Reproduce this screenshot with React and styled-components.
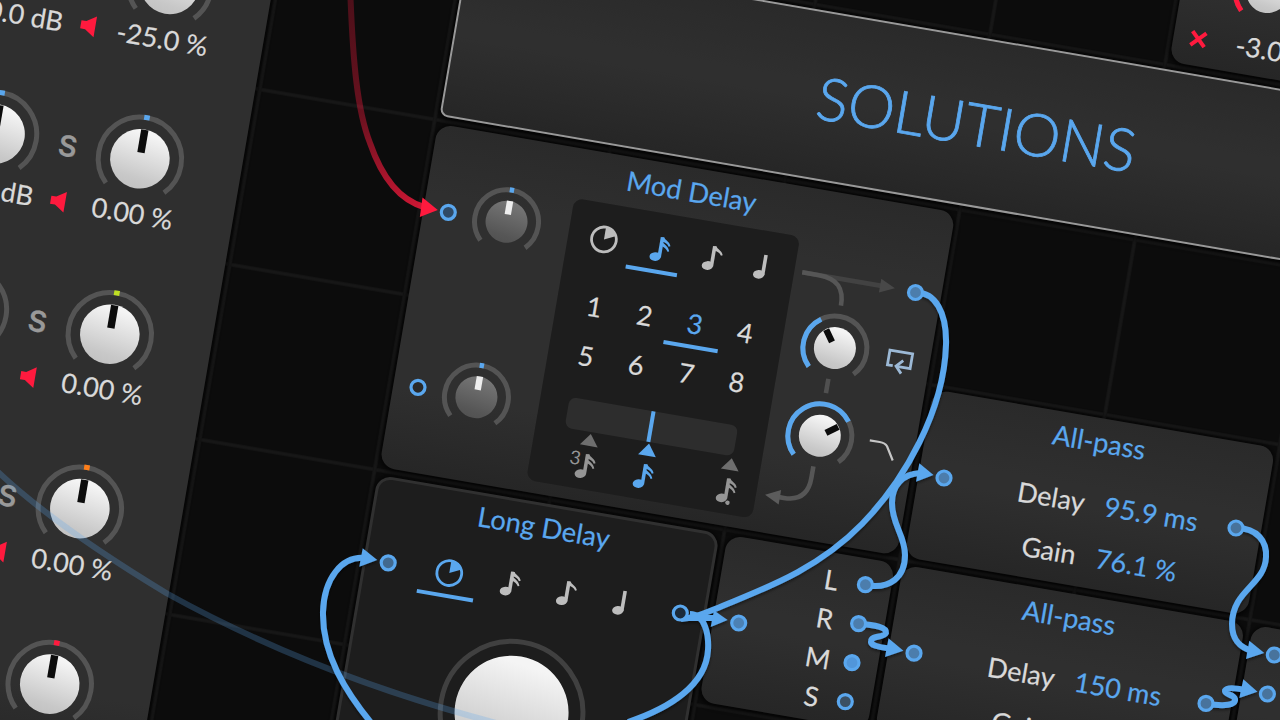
import React from "react";
import styled, { createGlobalStyle, css } from "styled-components";

const CELL = 177.6;
const BLUE = "#5aa7ee";
const RED = "#ff1a3e";
const TEXT = "#d9d9d9";

const GlobalStyle = createGlobalStyle`
  * { box-sizing: border-box; }
  html, body { margin: 0; padding: 0; background: #0c0c0c; }
  body { font-family: Lato, "Liberation Sans", sans-serif; overflow: hidden; }
  svg { display: block; flex: none; overflow: visible; }
`;

const Viewport = styled.main`
  position: relative;
  width: 1280px;
  height: 720px;
  overflow: hidden;
  background: #0c0c0c;
  color: ${TEXT};
  font-size: 27px;
  line-height: 34px;
  -webkit-text-stroke: 0.2px currentColor;
`;

const Canvas = styled.div`
  display: grid;
  width: ${CELL * 12}px;
  grid-template-columns: repeat(12, ${CELL}px);
  grid-template-rows: repeat(10, ${CELL}px);
  transform-origin: 0 0;
  transform: translate(434.8px, 119.5px) rotate(9.74deg) translate(${-5 * CELL}px, ${-4 * CELL}px);
  background-color: #0c0c0c;
  background-image:
    linear-gradient(90deg, #101010, #171717 1px, #171717 3px, #101010 4px, transparent 4px),
    linear-gradient(#101010, #171717 1px, #171717 3px, #101010 4px, transparent 4px);
  background-size: ${CELL}px ${CELL}px;
  background-position: -2px -2px;
`;

const Module = styled.section`
  grid-column: ${(p) => p.$col + 6} / span ${(p) => p.$w};
  grid-row: ${(p) => p.$row + 5} / span ${(p) => p.$h};
  margin: 4px;
  border-radius: 15px;
  background: linear-gradient(#2a2a2a, #2f2f2f 70px, #2f2f2f calc(100% - 80px), #262626);
  box-shadow: 0 1px 5px 2px rgba(0, 0, 0, 0.65);
  overflow: hidden;
  min-width: 0;
`;

const ScreenModule = styled(Module)`
  background: #1d1d1d;
  border: 3px solid #303030;
`;

const Banner = styled(Module)`
  display: flex;
  align-items: center;
  justify-content: center;
  padding-left: 4px;
  border: 2.5px solid #999;
  border-radius: 8px;
  color: ${BLUE};
  font-size: 59.3px;
  font-weight: 300;
  line-height: 70px;
  -webkit-text-stroke: 0.8px ${BLUE};
`;

const Title = styled.h2`
  margin: 0;
  padding-right: 2px;
  font-size: 27.3px;
  font-weight: 400;
  line-height: 34px;
  text-align: center;
  white-space: nowrap;
  color: ${BLUE};
`;

const MixerPanel = styled(Module)`
  display: flex;
  flex-direction: column;
  align-items: flex-end;
  padding-right: 46.2px;
  border-radius: 6px;
`;

const MixerRow = styled.div`
  display: grid;
  flex: none;
  grid-template-columns: 112px 35px 112px;
  grid-template-rows: 88px 20px;
  row-gap: 1.3px;
  height: ${CELL}px;
  padding-top: 40.8px;
  align-items: center;
  justify-items: center;
`;

const Value = styled.span`
  line-height: 20px;
  white-space: nowrap;
  padding-left: ${(p) => (p.$end ? 3 : 0)}px;
  padding-right: ${(p) => (p.$end ? 0 : 7)}px;
`;

const Solo = styled.span`
  color: #999;
  font-family: Inter, "Liberation Sans", sans-serif;
  font-size: 29px;
  font-weight: 600;
  line-height: 30px;
`;

const ModBody = styled.div`
  display: grid;
  grid-template-columns: 147px 229px 148.6px;
  margin-top: 9px;
`;

const InputKnobs = styled.div`
  display: flex;
  flex-direction: column;
  gap: ${CELL - 70}px;
  padding: 0 0 0 49px;
`;

const Screen = styled.div`
  height: 286px;
  padding: 0 10px;
  border-radius: 9px;
  background: #1d1d1d;
`;

const NoteRow = styled.div`
  display: grid;
  grid-template-columns: repeat(4, 1fr);
  width: ${(p) => p.$width || "auto"};
  padding-top: ${(p) => p.$top}px;
  margin: 0 auto;
`;

const NoteTab = styled.div`
  display: flex;
  flex-direction: column;
  align-items: center;
  gap: 5px;
  color: ${(p) => (p.$active ? BLUE : "#bdbdbd")};
  border-bottom: 4px solid ${(p) => (p.$active ? BLUE : "transparent")};
  padding-bottom: 6px;
`;

const NumberGrid = styled.div`
  display: grid;
  grid-template-columns: repeat(4, 1fr);
  row-gap: 6.4px;
  padding: 25.5px 2.5px 0;
`;

const NumberTab = styled.div`
  height: 43px;
  text-align: center;
  line-height: 36px;
  color: ${(p) => (p.$active ? BLUE : TEXT)};
  ${(p) => p.$active && css`
    border-bottom: 4px solid ${BLUE};
    margin: 0 -2px;
  `}
`;

const Slider = styled.div`
  display: flex;
  justify-content: center;
  width: 171px;
  height: 31px;
  margin: 18.5px auto 0;
  border-radius: 7px;
  background: #2d2d2d;
`;

const SliderMark = styled.span`
  width: 4px;
  background: ${BLUE};
`;

const SliderLegend = styled.svg`
  margin-top: 1px;
  font-family: Lato, sans-serif;
`;

const Routing = styled.div`
  position: relative;
  padding: 68.5px 0 0 18.5px;
  display: flex;
  flex-direction: column;
  gap: 18.7px;
`;

const RoutingWires = styled.svg`
  position: absolute;
  inset: 0 auto auto 0;
`;

const LongBody = styled.div`
  padding-right: 3px;
`;

const LongKnob = styled.div`
  display: flex;
  justify-content: center;
  padding-top: 28px;
`;

const SplitterLabels = styled.div`
  display: flex;
  flex-direction: column;
  width: 40px;
  margin: 7px 0 0 89.5px;
  text-align: center;
  line-height: 39.6px;
`;

const ParamGrid = styled.dl`
  display: grid;
  grid-template-columns: 168.6px 1fr;
  column-gap: 20.4px;
  margin: 18px 0 0;
  line-height: 53px;
  white-space: nowrap;
`;

const ParamName = styled.dt`
  text-align: right;
`;

const ParamValue = styled.dd`
  margin: 0;
  color: ${BLUE};
`;

const GainModule = styled(Module)`
  display: grid;
  grid-template-columns: 49px 1fr;
  grid-template-rows: 70px 1fr;
  align-content: start;
  padding-top: 50px;
  align-items: start;
`;

const GainKnob = styled.div`
  grid-column: 1 / -1;
  padding-left: 49.8px;
`;

const GainIcon = styled.div`
  padding: 15px 0 0 17px;
`;

const GainValue = styled.span`
  padding: 5px 0 0 13.5px;
  white-space: nowrap;
`;

const CableLayer = styled.svg`
  position: absolute;
  inset: 0;
`;

const TitleBar = styled.header`
  padding-top: ${(p) => p.$top}px;
`;

const polar = (r, deg) => {
  const a = ((deg - 90) * Math.PI) / 180;
  return [r * Math.cos(a), r * Math.sin(a)];
};

const arc = (r, from, to) => {
  const [x1, y1] = polar(r, from);
  const [x2, y2] = polar(r, to);
  return `M${x1} ${y1} A${r} ${r} 0 ${to - from > 180 ? 1 : 0} 1 ${x2} ${y2}`;
};

const KNOB = {
  large: { size: 88, ring: 41.7, cap: 29.8, pw: 7.4, pl: 23 },
  small: { size: 70, ring: 32, cap: 21, pw: 6.4, pl: 13.6 },
  huge: { size: 148, ring: 71.3, cap: 57, pw: 10, pl: 0 },
};

function Knob({ kind = "large", angle = 0, color = BLUE, from, dim }) {
  const k = KNOB[kind];
  const id = React.useId().replace(/[^a-zA-Z0-9]/g, "");
  const h = k.size / 2;
  return (
    <svg width={k.size} height={k.size} viewBox={`${-h} ${-h} ${k.size} ${k.size}`}>
      <defs>
        <linearGradient id={id} x1="0.08" y1="0" x2="-0.08" y2="1">
          <stop offset="0" stopColor={dim ? "#747474" : "#f4f4f4"} />
          <stop offset="0.75" stopColor={dim ? "#565656" : "#c8c8c8"} />
          <stop offset="1" stopColor={dim ? "#505050" : "#c0c0c0"} />
        </linearGradient>
      </defs>
      <path d={arc(k.ring, -135, 135)} fill="none" stroke={kind === "huge" ? "#404040" : "#545454"} strokeWidth="5" />
      {from !== undefined ? (
        <path d={arc(k.ring, from, angle)} fill="none" stroke={color} strokeWidth="5" />
      ) : kind !== "huge" && (
        <rect x={kind === "large" ? -2.8 : -2.2} y={-k.ring - 2.5} width={kind === "large" ? 5.6 : 4.4} height="5" fill={color} transform={`rotate(${angle})`} />
      )}
      <circle r={k.cap} fill={`url(#${id})`} />
      <rect
        x={-k.pw / 2}
        y={-k.cap + (dim ? 0 : 0.6)}
        width={k.pw}
        height={k.pl}
        fill={dim ? "#eee" : "#0c0c0c"}
        transform={`rotate(${angle})`}
      />
    </svg>
  );
}

function ClockIcon() {
  return (
    <svg width="30" height="30" viewBox="-15 -15 30 30">
      <circle r="12.4" fill="none" stroke="currentColor" strokeWidth="2.8" />
      <path d="M0 0 V-12 A12 12 0 0 1 10.8 -5.2 Z" fill="currentColor" />
    </svg>
  );
}

// The origin of the shape is the centre of the note head.
function NoteShape({ flags = 0 }) {
  return (
    <g fill="currentColor">
      <ellipse rx="5.7" ry="4.4" transform="rotate(-12)" />
      <rect x="2.2" y="-20.3" width="3.6" height="20.3" />
      {flags > 0 && (
        <path d="M3.5 -20.3 H5.8 C6.6 -18 11.6 -17.4 13.3 -12.8 L11.6 -12 C10 -14.8 7.6 -15.4 5 -15.9 Z" />
      )}
      {flags > 1 && (
        <path d="M5 -15 C7.5 -13.2 11.4 -12.1 12.9 -7.4 L11.3 -6.7 C10 -9.4 7.5 -10.5 5 -11.4 Z" />
      )}
    </g>
  );
}

function NoteIcon({ flags }) {
  return (
    <svg width="30" height="30" viewBox="-16.4 -23.2 30 30">
      <NoteShape flags={flags} />
    </svg>
  );
}

function MuteIcon() {
  return (
    <svg width="15" height="21" viewBox="0 0 15 21">
      <path d="M0 6.3 H5 L14.7 0 V21 L5 14.5 H0 Z" fill={RED} />
    </svg>
  );
}

function Notes({ active, width, top }) {
  return (
    <NoteRow $width={width} $top={top}>
      <NoteTab $active={active === 0}><ClockIcon /></NoteTab>
      <NoteTab $active={active === 1}><NoteIcon flags={2} /></NoteTab>
      <NoteTab $active={active === 2}><NoteIcon flags={1} /></NoteTab>
      <NoteTab $active={active === 3}><NoteIcon flags={0} /></NoteTab>
    </NoteRow>
  );
}

function MixerChannel({ level, pan, color, panAngle = 0 }) {
  return (
    <MixerRow>
      <Knob color={color} />
      <Solo>S</Solo>
      <Knob color={color} angle={panAngle} />
      <Value>{level}</Value>
      <MuteIcon />
      <Value $end>{pan}</Value>
    </MixerRow>
  );
}

function AllPass({ row, delay, gain }) {
  return (
    <Module $col={3} $row={row} $w={2} $h={1}>
      <TitleBar $top={7.5}><Title>All-pass</Title></TitleBar>
      <ParamGrid>
        <ParamName>Delay</ParamName>
        <ParamValue>{delay}</ParamValue>
        <ParamName>Gain</ParamName>
        <ParamValue>{gain}</ParamValue>
      </ParamGrid>
    </Module>
  );
}

function ModDelay() {
  return (
    <Module $col={0} $row={0} $w={3} $h={2}>
      <TitleBar $top={7}><Title>Mod Delay</Title></TitleBar>
      <ModBody>
        <InputKnobs>
          <Knob kind="small" dim />
          <Knob kind="small" dim />
        </InputKnobs>
        <Screen>
          <Notes active={1} top={20.3} />
          <NumberGrid>
            {[1, 2, 3, 4, 5, 6, 7, 8].map((n) => (
              <NumberTab key={n} $active={n === 3}>{n}</NumberTab>
            ))}
          </NumberGrid>
          <Slider><SliderMark /></Slider>
          <SliderLegend width="209" height="56" viewBox="161 284 209 56">
            <path d="M207 285 L216 297 H198 Z" fill="#6e6e6e" />
            <path d="M266 284.5 L275 297 H257 Z" fill={BLUE} />
            <path d="M350 285 L359 297 H341 Z" fill="#6e6e6e" />
            <g transform="translate(203.3 325.8)" color="#959595"><NoteShape flags={2} /></g>
            <g transform="translate(262.2 325.8)" color={BLUE}><NoteShape flags={2} /></g>
            <g transform="translate(346.5 325.8)" color="#959595"><NoteShape flags={2} /><circle cx="6.8" cy="3.8" r="2.2" fill="currentColor" /></g>
            <text x="195.7" y="317.6" textAnchor="middle" fontSize="19" fill="#959595" stroke="none">3</text>
          </SliderLegend>
        </Screen>
        <Routing>
          <RoutingWires width="149" height="285" viewBox="380 54 149 285" fill="none">
            <path d="M388 88.8 H470" stroke="#424242" strokeWidth="4.6" />
            <path d="M467 81.8 L482 88.8 L467 95.8 Z" fill="#484848" />
            <path d="M388 88.8 H405 C424 88.8 431.8 98 431.8 115.2" stroke="#565656" strokeWidth="4.6" />
            <path d="M431.8 189.5 V204" stroke="#505050" strokeWidth="4.6" />
            <path d="M431.8 278.2 V290 C431.8 306 424 314.3 408 314.3 H402" stroke="#565656" strokeWidth="4.6" />
            <path d="M404 307 L389 314.3 L404 321.6 Z" fill="#5c5c5c" />
            <path d="M493 165.6 H487.6 V150.6 H510.6 V165.6 H497" stroke="#9cb9d6" strokeWidth="2.8" />
            <path d="M502.5 158.8 L496.3 165.4 L502.5 172" stroke="#9cb9d6" strokeWidth="2.8" />
            <path d="M483 243 H493 C497 243 499 243.5 501 246 L509 259" stroke="#c6c6c6" strokeWidth="2.2" />
          </RoutingWires>
          <Knob kind="small" from={-135} angle={-35} />
          <Knob kind="small" from={-135} angle={54} />
        </Routing>
      </ModBody>
    </Module>
  );
}

const PORTS = [
  [448.3, 212.3, "#2f4a66"],
  [418, 387.3, "#292929"],
  [915.5, 292.5, "#4c7dac"],
  [944, 478, "#4c7dac"],
  [1236, 528, "#48739c"],
  [388.2, 562.8, "#41698f"],
  [680.3, 613, "#1c2b3a"],
  [738.7, 623, "#4c81b4"],
  [865.4, 584.7, "#4c7dac"],
  [858.6, 623.6, "#4c7dac"],
  [852, 662.7, "#5196da"],
  [845.3, 701.6, "#3b5064"],
  [914, 653.2, "#4c7dac"],
  [1206, 703.4, "#48739c"],
  [1274.3, 655, "#48739c"],
  [1267.4, 694, "#48739c"],
];

const CABLES = [
  "M372 724 C346 692 322 655 323 612 C324 578 342 556 365 558",
  "M690 614 C705 614 709 635 708 650 C706 685 670 708 628 722",
  "M915.5 292.5 C935 292 947 312 946 345 C944 410 905 480 862 524 C815 572 760 590 715 609 C700 615 692 618 681 619",
  "M683 618 L715 618",
  "M865 585 C890 590 905 577 905 555 C905 535 892 525 892 503 C892 485 903 474 920 473",
  "M858.5 623.7 C875 625 887 627 886 633 C884 638 872 635 871 641 C870 646 880 647 892 649",
  "M1236 528 C1258 528 1267 542 1266 557 C1265 585 1232 590 1232 624 C1232 642 1242 648 1252 651",
  "M1206 703.5 C1225 707 1236 705 1235 699 C1234 694 1224 695 1225 690.5 C1227 687 1235 688 1245 690",
];

const HEADS = [
  "M362.7 548.3 L377.3 560 L359.3 566.7 Z",
  "M714 610.5 L727.7 620 L710.7 627 Z",
  "M919.3 463.3 L933.5 475 L916 481.7 Z",
  "M888.5 638.3 L903.4 650.7 L885 657 Z",
  "M1249.3 640.7 L1264.3 653 L1246 659 Z",
  "M1243.3 679.3 L1257.5 691.7 L1239.3 698 Z",
];

function Cables() {
  return (
    <CableLayer width="1280" height="720" viewBox="0 0 1280 720" fill="none">
      <defs>
        <linearGradient id="redCable" gradientUnits="userSpaceOnUse" x1="350" y1="0" x2="420" y2="210">
          <stop offset="0" stopColor={RED} stopOpacity="0.27" />
          <stop offset="0.5" stopColor={RED} stopOpacity="0.38" />
          <stop offset="1" stopColor={RED} stopOpacity="0.8" />
        </linearGradient>
        <filter id="cableShadow" x="-10%" y="-10%" width="120%" height="120%">
          <feDropShadow dx="0" dy="2" stdDeviation="1.5" floodColor="#000" floodOpacity="0.45" />
        </filter>
      </defs>
      <path d="M-4 470 C40 512 100 553 167 593.5 C260 645 370 690 500 724" stroke={BLUE} strokeOpacity="0.25" strokeWidth="6" />
      <path d="M350.5 -2 C353 60 357 110 370 143 C382 178 400 200 424 207" stroke="url(#redCable)" strokeWidth="6" />
      <path d="M422.5 197.5 L437.8 210 L419.8 217 Z" fill={RED} />
      <g filter="url(#cableShadow)">
        {CABLES.map((d) => <path key={d} d={d} stroke={BLUE} strokeWidth="6" />)}
        {HEADS.map((d) => <path key={d} d={d} fill={BLUE} />)}
      </g>
      {PORTS.map(([x, y, fill]) => (
        <circle key={`${x}-${y}`} cx={x} cy={y} r="7" fill={fill} stroke={BLUE} strokeWidth="3.2" />
      ))}
    </CableLayer>
  );
}

export default function App() {
  return (
    <Viewport>
      <GlobalStyle />
      <Canvas>
        <MixerPanel $col={-4} $row={-1} $w={3} $h={5}>
          <MixerChannel level="-10.0 dB" pan="-25.0 %" color={BLUE} panAngle={-34} />
          <MixerChannel level="-10.0 dB" pan="0.00 %" color={BLUE} />
          <MixerChannel level="0.0 dB" pan="0.00 %" color="#bfe023" />
          <MixerChannel level="0.0 dB" pan="0.00 %" color="#ff7f1a" />
          <MixerChannel level="0.0 dB" pan="0.00 %" color={RED} />
        </MixerPanel>

        <GainModule $col={4} $row={-2} $w={2} $h={1}>
          <GainKnob><Knob kind="small" from={-135} angle={40} color={RED} /></GainKnob>
          <GainIcon>
            <svg width="16" height="16" viewBox="0 0 16 16">
              <path d="M1 1 L15 15 M15 1 L1 15" stroke={RED} strokeWidth="4" />
            </svg>
          </GainIcon>
          <GainValue>-3.0 dB</GainValue>
        </GainModule>

        <Banner $col={0} $row={-1} $w={6} $h={1}>SOLUTIONS</Banner>
        <ModDelay />

        <ScreenModule $col={0} $row={2} $w={2} $h={2}>
          <TitleBar $top={4}><Title>Long Delay</Title></TitleBar>
          <LongBody>
            <Notes active={0} width="228px" top={29} />
            <LongKnob><Knob kind="huge" /></LongKnob>
          </LongBody>
        </ScreenModule>

        <Module $col={2} $row={2} $w={1} $h={1}>
          <SplitterLabels>
            {["L", "R", "M", "S"].map((c) => <span key={c}>{c}</span>)}
          </SplitterLabels>
        </Module>

        <AllPass row={1} delay="95.9 ms" gain="76.1 %" />
        <AllPass row={2} delay="150 ms" gain="76.1 %" />
        <Module $col={5} $row={2} $w={2} $h={1} />
      </Canvas>
      <Cables />
    </Viewport>
  );
}
